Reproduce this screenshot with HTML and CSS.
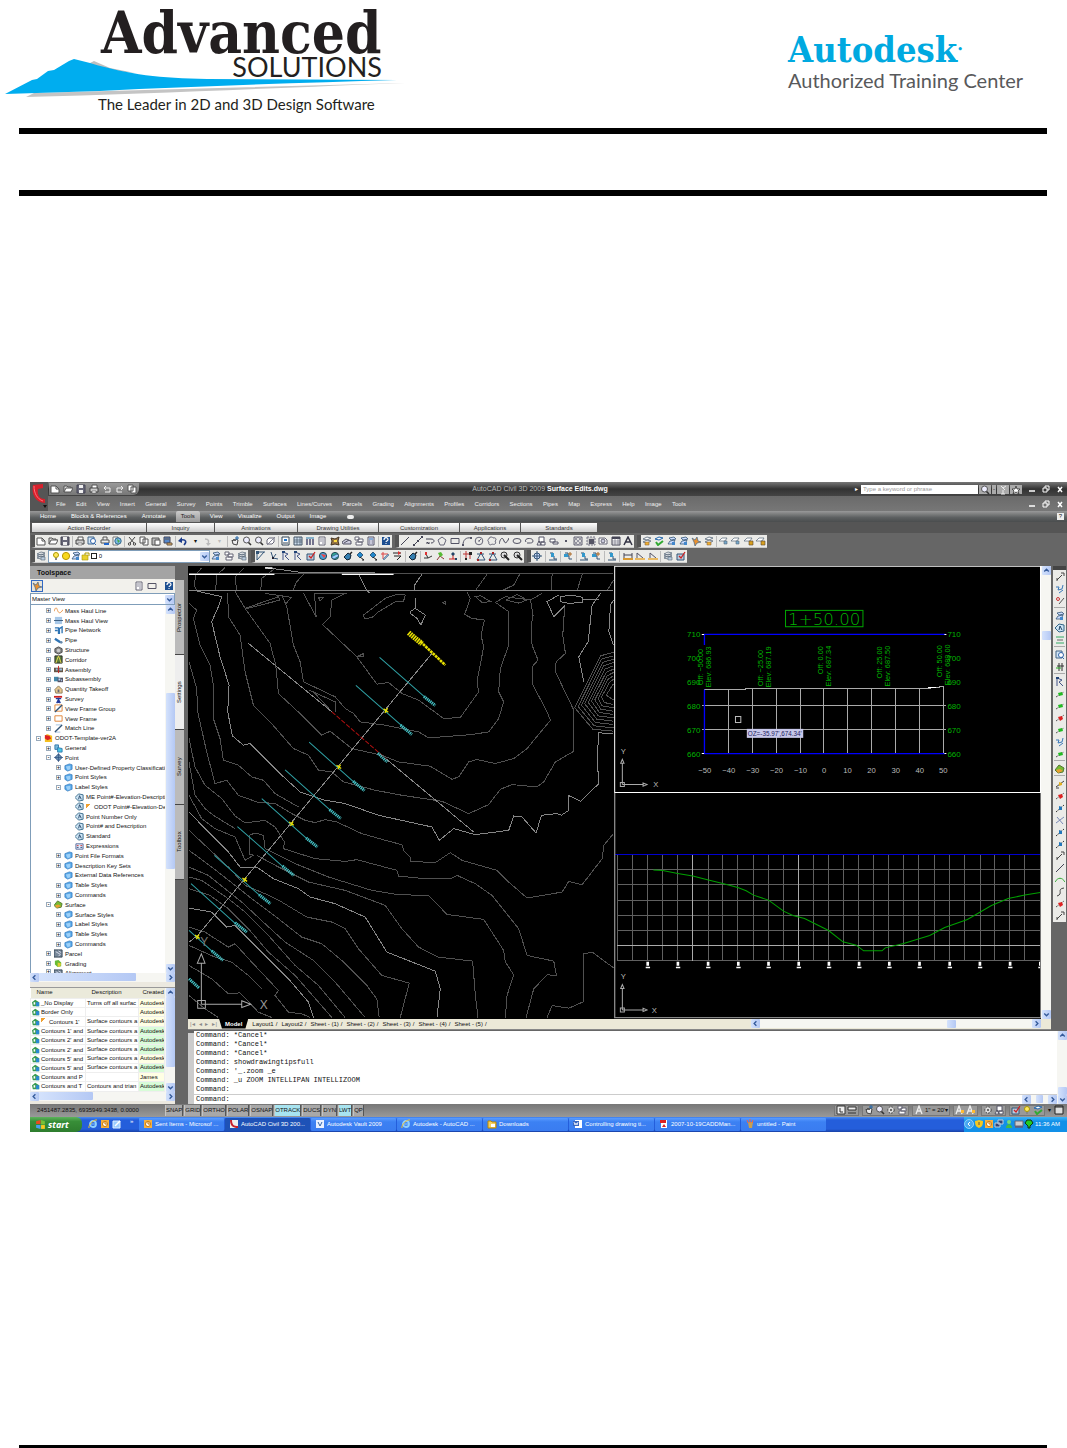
FILE: index.html
```html
<!DOCTYPE html>
<html lang="en">
  <head>
    <meta charset="UTF-8" />
    <meta name="viewport" content="width=device-width, initial-scale=1.0" />
    <title>Advanced Solutions</title>
    <link rel="stylesheet" href="styles.css">
  </head>
  <body>
    <!-- icon sprite -->
    <svg class="sprite" aria-hidden="true">
      <symbol id="new" viewBox="0 0 10 10"><path d="M1 2h5l3 3v4H1z" fill="#fff" stroke="#555"/><path d="M6 2v3h3" fill="none" stroke="#555"/></symbol>
      <symbol id="open" viewBox="0 0 10 10"><path d="M1 8V2h3l1 1h3v2" fill="#ddd" stroke="#555"/><path d="M1 8l2-4h7L8 8z" fill="#fff" stroke="#555"/></symbol>
      <symbol id="save" viewBox="0 0 10 10"><path d="M1 1h8v8H1z" fill="#667" stroke="#445"/><path d="M3 1h4v3H3zM3 6h4v3H3z" fill="#eee"/></symbol>
      <symbol id="print" viewBox="0 0 10 10"><path d="M3 4V1h5v3" fill="#fff" stroke="#555"/><path d="M1 4h8v4H1z" fill="#ccc" stroke="#444"/><path d="M3 7h4v2H3z" fill="#fff" stroke="#555" stroke-width=".6"/></symbol>
      <symbol id="preview" viewBox="0 0 10 10"><path d="M1 1h6v7H1z" fill="#cfe3f5" stroke="#468"/><circle cx="6" cy="5" r="2.500" fill="#fff" stroke="#36a"/><path d="M7 7l2 2" stroke="#36a"/></symbol>
      <symbol id="publish" viewBox="0 0 10 10"><path d="M3 4V1h4v3M1 4h8v3H1z" fill="#eee" stroke="#555"/><path d="M4 8h5" stroke="#26c" stroke-width="2"/></symbol>
      <symbol id="globe" viewBox="0 0 10 10"><path d="M1 1h5v8H1z" fill="#fff" stroke="#777"/><circle cx="6" cy="5" r="3.200" fill="#7ab8e8" stroke="#368"/><path d="M5 3l3 2-2 2z" fill="#4a4"/></symbol>
      <symbol id="cut" viewBox="0 0 10 10"><path d="M2 1l5 6M8 1L3 7" stroke="#444" fill="none"/><circle cx="2.500" cy="8" r="1.200" fill="none" stroke="#444"/><circle cx="7.500" cy="8" r="1.200" fill="none" stroke="#444"/></symbol>
      <symbol id="copy" viewBox="0 0 10 10"><path d="M1 1h5v6H1zM4 3h5v6H4z" fill="#fff" stroke="#555"/></symbol>
      <symbol id="paste" viewBox="0 0 10 10"><path d="M1 2h7v7H1z" fill="#bbb" stroke="#555"/><path d="M4 4h5v5H4z" fill="#fff" stroke="#555"/></symbol>
      <symbol id="match" viewBox="0 0 10 10"><path d="M1 1h6v6H1z" fill="#58c" stroke="#445"/><path d="M2 3h4M4 7h5v2H4z" fill="#eb6" stroke="#654"/></symbol>
      <symbol id="undo" viewBox="0 0 10 10"><path d="M6 9c3-3 2-6-3-5" fill="none" stroke="#1c3c8c" stroke-width="1.600"/><path d="M0 5l4-4v6z" fill="#1c3c8c"/></symbol>
      <symbol id="redo" viewBox="0 0 10 10"><path d="M3 3c4 0 4 2 3 5" fill="none" stroke="#bbb" stroke-width="1.400"/><path d="M4 7h5L6 10z" fill="#bbb"/></symbol>
      <symbol id="pan" viewBox="0 0 10 10"><path d="M2 4l1 4 4 1 1-5-2-1-1 2-1-2-1 2z" fill="#eee" stroke="#444"/><path d="M7 0v4M5 2h4" stroke="#26a"/></symbol>
      <symbol id="zoom" viewBox="0 0 10 10"><circle cx="4.500" cy="4" r="3" fill="#eef" stroke="#555"/><path d="M6.500 6.500L9 9" stroke="#333" stroke-width="1.600"/></symbol>
      <symbol id="orbit" viewBox="0 0 10 10"><path d="M3 2h5v4L6 8H1V4z" fill="#fff" stroke="#667"/><path d="M1 9l8-8" stroke="#889"/></symbol>
      <symbol id="props" viewBox="0 0 10 10"><path d="M1 1h7v8H1z" fill="#fff" stroke="#345"/><path d="M3 3h3v2H3z" fill="#27c"/><path d="M2 7h5" stroke="#345"/></symbol>
      <symbol id="grid" viewBox="0 0 10 10"><path d="M1 1h8v8H1z" fill="#cde" stroke="#456"/><path d="M1 4h8M1 6h8M4 1v8M7 1v8" stroke="#456" stroke-width=".7"/></symbol>
      <symbol id="bars" viewBox="0 0 10 10"><path d="M1 2h8" stroke="#27a"/><path d="M2 3v6M5 3v6M8 3v6" stroke="#557" stroke-width="1.600"/></symbol>
      <symbol id="sheet" viewBox="0 0 10 10"><path d="M2 1h6v8H2z" fill="#fff" stroke="#667"/><path d="M3 3h4M3 5h4M5 7h2" stroke="#889"/></symbol>
      <symbol id="mark" viewBox="0 0 10 10"><path d="M1 2l4 1 4-2-1 4 1 4-4-1-4 1 1-4z" fill="#974" stroke="#432"/><path d="M4 4h3v2H4z" fill="#fd4"/></symbol>
      <symbol id="hill" viewBox="0 0 10 10"><path d="M0 6l4-3 5 2v3H1z" fill="#ccd" stroke="#556"/><path d="M2 7l5-3" stroke="#556"/></symbol>
      <symbol id="blocks" viewBox="0 0 10 10"><path d="M1 1h4v3H1zM4 3h5v3H4zM2 6h6v3H2z" fill="#fff" stroke="#667"/></symbol>
      <symbol id="calc" viewBox="0 0 10 10"><path d="M2 1h6v8H2z" fill="#eef" stroke="#556"/><path d="M3 3h4" stroke="#26a"/><path d="M3 5h4M3 7h4" stroke="#556" stroke-dasharray="1 .5"/></symbol>
      <symbol id="help" viewBox="0 0 10 10"><path d="M1 1h8v8H1z" fill="#1d4f91"/><path d="M3 4c0-3 4-3 4-.5C7 5 5 5 5 6" fill="none" stroke="#fff" stroke-width="1.200"/><path d="M4.500 7h1v1h-1z" fill="#fff"/></symbol>
      <symbol id="line" viewBox="0 0 10 10"><path d="M1 9l8-8" stroke="#445"/></symbol>
      <symbol id="xline" viewBox="0 0 10 10"><path d="M1 9l8-8" stroke="#445"/><path d="M0 8h2v2H0zM8 0h2v2H8zM4 4h2v2H4z" fill="#445"/></symbol>
      <symbol id="pline" viewBox="0 0 10 10"><path d="M1 7h4M1 3h5c4 0 4 4 0 4" fill="none" stroke="#445"/><path d="M2 6l2 2" stroke="#445"/></symbol>
      <symbol id="polygon" viewBox="0 0 10 10"><path d="M5 1l4 3-2 5H3L1 4z" fill="none" stroke="#667"/></symbol>
      <symbol id="rect" viewBox="0 0 10 10"><path d="M1 2.500h8v5H1z" fill="none" stroke="#556"/></symbol>
      <symbol id="arc" viewBox="0 0 10 10"><path d="M1 9C1 4 4 1 9 2" fill="none" stroke="#556"/><path d="M0 8h2v2H0zM8 1h2v2H8z" fill="#556"/></symbol>
      <symbol id="circle" viewBox="0 0 10 10"><circle cx="5" cy="5" r="3.800" fill="none" stroke="#667"/><path d="M5 5l2-2M4 5h2" stroke="#667"/></symbol>
      <symbol id="cloud" viewBox="0 0 10 10"><path d="M2 3c0-3 4-2 4-1 3-1 4 2 2 3 2 3-1 4-3 3-2 2-4 0-3-2-2-1-1-3 0-3z" fill="none" stroke="#667"/></symbol>
      <symbol id="spline" viewBox="0 0 10 10"><path d="M0 8c2-8 4-6 5-3s3 2 5-3" fill="none" stroke="#445"/></symbol>
      <symbol id="ellipse" viewBox="0 0 10 10"><ellipse cx="5" cy="5" rx="4" ry="2.500" fill="none" stroke="#556"/></symbol>
      <symbol id="earc" viewBox="0 0 10 10"><path d="M2 6C-1 2 9 1 9 5c0 2-2 2-4 2" fill="none" stroke="#556"/><path d="M4 6v2" stroke="#556"/></symbol>
      <symbol id="insert" viewBox="0 0 10 10"><path d="M3 1h5v5H3zM1 9l2-4 2 4zM5 6h4v3H5z" fill="#fff" stroke="#556"/></symbol>
      <symbol id="make" viewBox="0 0 10 10"><path d="M1 3h5v3H1zM4 6h5v2H4z" fill="#fff" stroke="#556"/></symbol>
      <symbol id="point" viewBox="0 0 10 10"><path d="M4 4h2v2H4z" fill="#556"/></symbol>
      <symbol id="hatch" viewBox="0 0 10 10"><path d="M1 1h8v8H1z" fill="#ddd" stroke="#667"/><path d="M1 5l4-4M1 9l8-8M5 9l4-4M1 5l4 4M1 1l8 8M5 1l4 4" stroke="#778" stroke-width=".7"/></symbol>
      <symbol id="grad" viewBox="0 0 10 10"><path d="M1 1h8v8H1z" fill="#ccc" stroke="#778" stroke-dasharray="2 1"/><path d="M3 3h5v5H3z" fill="#556"/></symbol>
      <symbol id="region" viewBox="0 0 10 10"><path d="M1 2h6l2 2v4H1z" fill="#fff" stroke="#667"/><circle cx="5" cy="5" r="2" fill="#ccd" stroke="#667"/></symbol>
      <symbol id="table" viewBox="0 0 10 10"><path d="M1 1h8v8H1z" fill="#fff" stroke="#445"/><path d="M1 2h8" stroke="#445" stroke-width="2"/><path d="M1 5h8M1 7h8M4 2v7M7 2v7" stroke="#667" stroke-width=".6"/></symbol>
      <symbol id="mtext" viewBox="0 0 10 10"><path d="M1 9l4-8 4 8M3 6h4" fill="none" stroke="#334" stroke-width="1.500"/></symbol>
      <symbol id="layers" viewBox="0 0 10 10"><path d="M1 3l4-2 4 1-4 2zM1 5l4-2 4 1-4 2zM1 7l4-2 4 1-4 2z" fill="#fff" stroke="#567" stroke-width=".8"/><path d="M5 6h4v3H5z" fill="#bcd" stroke="#567" stroke-width=".6"/></symbol>
      <symbol id="layer-y" viewBox="0 0 10 10"><path d="M1 3l4-2 4 1-4 2zM1 6l4-2 4 1-4 2z" fill="#fff" stroke="#567" stroke-width=".8"/><path d="M3 6h4v3H3z" fill="#f0b030" stroke="#864" stroke-width=".6"/></symbol>
      <symbol id="layer-g" viewBox="0 0 10 10"><path d="M1 3l4-2 4 1-4 2z" fill="#fff" stroke="#26a"/><path d="M2 6l2 3 5-4" fill="none" stroke="#3a3" stroke-width="2"/></symbol>
      <symbol id="layer-b" viewBox="0 0 10 10"><path d="M2 2l5-1 2 2-5 1zM1 8l2-3 5-1-2 4z" fill="#cdf" stroke="#357" stroke-width=".8"/><path d="M5 6h3v3H5z" fill="#48c"/></symbol>
      <symbol id="layer-s" viewBox="0 0 10 10"><path d="M0 5l3-3h5L6 5z" fill="#fff" stroke="#567" stroke-width=".7"/><path d="M5 5h3v3H5z" fill="#7ac" stroke="#567" stroke-width=".6"/></symbol>
      <symbol id="layer-l" viewBox="0 0 10 10"><path d="M0 5l3-3h5L6 5z" fill="#fff" stroke="#567" stroke-width=".7"/><path d="M5 5h4v4H5z" fill="#d8a020" stroke="#543" stroke-width=".6"/></symbol>
      <symbol id="spark" viewBox="0 0 10 10"><path d="M1 2l3 2 2-3 1 4 3 1-4 1-2 3-1-4z" fill="#e89030" stroke="#468" stroke-width=".7"/></symbol>
      <symbol id="angle" viewBox="0 0 10 10"><path d="M1 1h8M1 1v8l7-8" fill="none" stroke="#357"/><path d="M0 0h3v3H0z" fill="#357"/></symbol>
      <symbol id="traverse" viewBox="0 0 10 10"><path d="M2 1l2 6 5 1M4 7l3-4" fill="none" stroke="#357"/><path d="M3 6h2v2H3z" fill="#223"/></symbol>
      <symbol id="flag" viewBox="0 0 10 10"><path d="M2 9V1l5 2-3 2 4 4" fill="none" stroke="#458"/><path d="M1 0h3v2H1z" fill="#247"/></symbol>
      <symbol id="check" viewBox="0 0 10 10"><path d="M1 3h7v6H1z" fill="#bcd" stroke="#357"/><path d="M3 5l2 2 4-6" fill="none" stroke="#c22" stroke-width="1.300"/></symbol>
      <symbol id="ball" viewBox="0 0 10 10"><circle cx="5" cy="5" r="3.600" fill="#48a0d8" stroke="#245"/><path d="M3 3l5 1-2 3z" fill="#e44"/></symbol>
      <symbol id="ball-g" viewBox="0 0 10 10"><circle cx="5" cy="5" r="3.600" fill="#3a9" stroke="#245"/><path d="M1 6l6-3 2 2-5 3z" fill="#9cf" stroke="#246" stroke-width=".6"/></symbol>
      <symbol id="tag" viewBox="0 0 10 10"><path d="M1 6l4-4 3 2-1 4-3 1z" fill="#357fb0" stroke="#123"/><path d="M7 3l2-2" stroke="#222" stroke-width="1.500"/></symbol>
      <symbol id="probe" viewBox="0 0 10 10"><path d="M2 4l3-3 3 3-3 3z" fill="#28c" stroke="#135" stroke-width=".7"/><path d="M5 6l4 3M7 9h2" stroke="#222"/></symbol>
      <symbol id="pencil" viewBox="0 0 10 10"><path d="M1 3h7M3 1v7" stroke="#d44"/><path d="M3 8l5-5 1 1-5 5z" fill="#8ac" stroke="#357" stroke-width=".5"/></symbol>
      <symbol id="road" viewBox="0 0 10 10"><path d="M1 2h8M2 5h7M5 9l4-4" fill="none" stroke="#222"/><path d="M6 0l3 2-3 2z" fill="#d33"/></symbol>
      <symbol id="nodes" viewBox="0 0 10 10"><path d="M1 7h4l-2-4M5 7l4-2" fill="none" stroke="#333"/><path d="M2 1h2v3H2z" fill="#d33"/></symbol>
      <symbol id="nodes-g" viewBox="0 0 10 10"><path d="M2 9l3-4 4 3" fill="none" stroke="#833"/><path d="M3 2l3-1 2 3-3 2z" fill="#5b3"/></symbol>
      <symbol id="nodes-b" viewBox="0 0 10 10"><path d="M1 8h8M5 8V4" stroke="#c22"/><path d="M3 3l2-2 2 2-2 2zM7 7h2v2H7z" fill="#246"/></symbol>
      <symbol id="crossing" viewBox="0 0 10 10"><path d="M0 3h9M3 0v9M7 3v5" stroke="#b33"/><path d="M6 1h3v3H6zM2 7h2v2H2z" fill="#222"/></symbol>
      <symbol id="tri" viewBox="0 0 10 10"><path d="M1 9l4-7 4 7zM1 3h7" fill="none" stroke="#357"/><path d="M4 1h2v2H4zM1 8h2v2H1z" fill="#a22"/></symbol>
      <symbol id="disc" viewBox="0 0 10 10"><circle cx="4" cy="4" r="3" fill="#ddd" stroke="#333"/><path d="M4 4l5 5" stroke="#222" stroke-width="2"/></symbol>
      <symbol id="target" viewBox="0 0 10 10"><circle cx="5" cy="5" r="3" fill="#cdf" stroke="#357"/><path d="M0 5h10M5 0v10" stroke="#357"/></symbol>
      <symbol id="steps" viewBox="0 0 10 10"><path d="M2 2h3v3h1v3h3M1 9h8" fill="none" stroke="#357"/><path d="M3 2h3v4H3z" fill="#39c"/></symbol>
      <symbol id="steps2" viewBox="0 0 10 10"><path d="M2 2h3v3h1v3h3" fill="none" stroke="#357"/><path d="M1 3h4v3H1z" fill="#39c"/><path d="M5 3h4M7 1v4" stroke="#a62"/></symbol>
      <symbol id="bench" viewBox="0 0 10 10"><path d="M1 2v5M9 2v5M1 4h8" stroke="#445"/><path d="M0 7h10v2H0z" fill="#d89830"/></symbol>
      <symbol id="ramp" viewBox="0 0 10 10"><path d="M2 7V2l6 5" fill="none" stroke="#556"/><path d="M0 7h10v2H0z" fill="#e8b860"/></symbol>
      <symbol id="arrow" viewBox="0 0 10 10"><path d="M2 8l5-5M2 6v3M6 1h3v3" fill="none" stroke="#444"/></symbol>
      <symbol id="arrow-b" viewBox="0 0 10 10"><path d="M1 3h3l-1 3 4-1 1-4M4 9l4-3" fill="none" stroke="#3a78b8"/></symbol>
      <symbol id="arrow-r" viewBox="0 0 10 10"><path d="M4 8l5-6" stroke="#555"/><circle cx="3" cy="3" r="1.500" fill="none" stroke="#c33"/></symbol>
      <symbol id="pt-g" viewBox="0 0 10 10"><path d="M1 8l8-5" stroke="#555" stroke-dasharray="2 1"/><path d="M3 4l4-1 1 3-4 1z" fill="#2b2"/></symbol>
      <symbol id="pt-r" viewBox="0 0 10 10"><path d="M1 8l8-6" stroke="#555" stroke-dasharray="2 1"/><path d="M3 4l4-1 1 3-3 2z" fill="#d22"/></symbol>
      <symbol id="pt-b" viewBox="0 0 10 10"><path d="M1 9l8-7" stroke="#333" stroke-dasharray="2 1"/><path d="M4 3l3 1v3H4z" fill="#27b"/></symbol>
      <symbol id="pt-y" viewBox="0 0 10 10"><path d="M1 8l8-6M1 9h3" stroke="#444"/><path d="M4 3l3 1v2L4 7z" fill="#e0b020"/></symbol>
      <symbol id="cross" viewBox="0 0 10 10"><path d="M1 8l8-6M2 2l6 7" stroke="#7a8ab8"/></symbol>
      <symbol id="fork" viewBox="0 0 10 10"><path d="M4 1v8M7 1v8M2 4h7" stroke="#333"/><path d="M1 6h5" stroke="#2a2"/></symbol>
      <symbol id="hump" viewBox="0 0 10 10"><path d="M0 7c3-5 7-5 10 0" fill="none" stroke="#3a3"/></symbol>
      <symbol id="lines" viewBox="0 0 10 10"><path d="M1 2h8M1 8h8" stroke="#3a6"/><path d="M2 5h6" stroke="#666"/></symbol>
      <symbol id="ess" viewBox="0 0 10 10"><path d="M9 1c-8 1 0 6-7 8" fill="none" stroke="#444"/></symbol>
      <symbol id="folder" viewBox="0 0 10 10"><path d="M1 3l5-2 3 1v5L4 9 1 7z" fill="#58a8e8" stroke="#2870b8" stroke-width=".7"/><path d="M2 4l5-1v4L4 8z" fill="#9cd0f8"/></symbol>
      <symbol id="label" viewBox="0 0 10 10"><path d="M0 5l4-4 5 1v6L4 9z" fill="#cde4f4" stroke="#368"/><path d="M4 7l1-4 2 4" fill="none" stroke="#246"/></symbol>
      <symbol id="expr" viewBox="0 0 10 10"><path d="M1 2h8v6H1z" fill="#e4ecfa" stroke="#569"/><path d="M2 4h2M6 4h2" stroke="#c33"/><path d="M2 6h2M6 6h2" stroke="#247"/></symbol>
      <symbol id="wave" viewBox="0 0 10 10"><path d="M0 6c2-6 3-4 4-1s3 4 6-1" fill="none" stroke="#e89040"/></symbol>
      <symbol id="strip" viewBox="0 0 10 10"><path d="M1 1h8v8H1z" fill="#a8c8e8"/><path d="M0 5h10" stroke="#357"/></symbol>
      <symbol id="pipes" viewBox="0 0 10 10"><path d="M1 2h4v7M6 9V3l3-2v7M1 5h3" fill="none" stroke="#2e74b5" stroke-width="1.500"/></symbol>
      <symbol id="pipe" viewBox="0 0 10 10"><path d="M1 3l6 4" stroke="#2e74b5" stroke-width="2.500"/><circle cx="8" cy="7" r="1.500" fill="#68a"/></symbol>
      <symbol id="dish" viewBox="0 0 10 10"><path d="M3 1l4 4M5 3l3-2M5 5v4M3 9h4" fill="none" stroke="#eee"/></symbol>
      <symbol id="struct" viewBox="0 0 10 10"><path d="M1 3l4-2 4 2v4L5 9 1 7z" fill="#888" stroke="#444"/><circle cx="5" cy="5" r="2" fill="#ccc"/></symbol>
      <symbol id="corr" viewBox="0 0 10 10"><path d="M1 1h8v8H1z" fill="#5a7a3a" stroke="#222"/><path d="M2 9L5 1l3 8" fill="none" stroke="#ed5"/></symbol>
      <symbol id="assy" viewBox="0 0 10 10"><path d="M0 3h10v5H0z" fill="#654"/><path d="M5 1v8" stroke="#c22"/><path d="M2 4h2v2H2zM6 4h3v2H6z" fill="#9bd"/></symbol>
      <symbol id="subassy" viewBox="0 0 10 10"><path d="M0 2h5v5H0z" fill="#48a"/><path d="M4 3h6v5H4z" fill="#556"/><path d="M5 4h2v2H5zM8 5h1v2H8z" fill="#bdf"/></symbol>
      <symbol id="house" viewBox="0 0 10 10"><path d="M1 5l4-4 4 4v4H2z" fill="#e8c890" stroke="#875"/><path d="M4 5h2v3H4z" fill="#667"/></symbol>
      <symbol id="survey" viewBox="0 0 10 10"><path d="M0 2h9" stroke="#c22" stroke-width="2"/><path d="M2 4h6M5 3v6M3 9l2-4 2 4" fill="none" stroke="#223a9c" stroke-width="1.500"/></symbol>
      <symbol id="frame" viewBox="0 0 10 10"><path d="M1 2h8v6H1z" fill="#fff" stroke="#e08030"/></symbol>
      <symbol id="frames" viewBox="0 0 10 10"><path d="M1 1h8v7H1z" fill="#fff" stroke="#e08030"/><path d="M1 9l8-8" stroke="#357" stroke-width="1.500"/></symbol>
      <symbol id="matchline" viewBox="0 0 10 10"><path d="M2 1h7M1 9h6" stroke="#9bd"/><path d="M1 9l8-8" stroke="#357" stroke-width="1.500"/></symbol>
      <symbol id="dwg" viewBox="0 0 10 10"><path d="M3 0l6 2v7H1V4z" fill="#f4c020"/><path d="M1 1l5 1 2 3-4 2-3-2z" fill="#d22"/></symbol>
      <symbol id="general" viewBox="0 0 10 10"><path d="M1 1h4v5H1z" fill="#7bd" stroke="#37a"/><path d="M4 4l5 1v4H4z" fill="#48c8e8" stroke="#37a"/></symbol>
      <symbol id="ptnode" viewBox="0 0 10 10"><path d="M5 1l4 4-4 4-4-4z" fill="#6a8fb0" stroke="#247"/><path d="M5 0v10M0 5h10" stroke="#247" stroke-width=".6"/></symbol>
      <symbol id="surface" viewBox="0 0 10 10"><path d="M0 6l4-5 5 3-1 4-5 1z" fill="#7b3" stroke="#573"/><path d="M1 6l4-1 3 2-5 2z" fill="#e9a030"/></symbol>
      <symbol id="parcel" viewBox="0 0 10 10"><path d="M0 1h9v8H0z" fill="#789" stroke="#345"/><path d="M2 3l5 3-2 2M5 2l3 2" stroke="#dde" fill="none"/></symbol>
      <symbol id="grading" viewBox="0 0 10 10"><path d="M1 2l4-1 3 3v4L4 9 1 6z" fill="#6b3"/><path d="M4 4l4 1-1 3-3 1z" fill="#dc3"/></symbol>
      <symbol id="style" viewBox="0 0 10 10"><path d="M0 4l4-3 5 3v5H1z" fill="#3a9a50"/><path d="M5 4h4v5H5z" fill="#2a88d0"/><path d="M2 4h2v3H2z" fill="#fff"/></symbol>
      <symbol id="bulb" viewBox="0 0 10 10"><circle cx="5" cy="4" r="2.500" fill="#ffe860" stroke="#a90"/><path d="M4 7h2v2H4z" fill="#888"/></symbol>
      <symbol id="sun" viewBox="0 0 10 10"><circle cx="5" cy="5" r="3.600" fill="#f8d820" stroke="#b90"/></symbol>
      <symbol id="lock" viewBox="0 0 10 10"><path d="M4 4V2h4v3" fill="none" stroke="#a90"/><path d="M1 4h6v5H1z" fill="#e8d030" stroke="#a90" stroke-width=".6"/></symbol>
      <symbol id="chev-d" viewBox="0 0 10 10"><path d="M2.500 4L5 6.500 7.500 4" fill="none" stroke="#345a9a" stroke-width="1.500"/></symbol>
      <symbol id="chev-u" viewBox="0 0 10 10"><path d="M2.500 6L5 3.500 7.500 6" fill="none" stroke="#345a9a" stroke-width="1.500"/></symbol>
      <symbol id="chev-l" viewBox="0 0 10 10"><path d="M6 2.500L3.500 5 6 7.500" fill="none" stroke="#345a9a" stroke-width="1.500"/></symbol>
      <symbol id="chev-r" viewBox="0 0 10 10"><path d="M4 2.500L6.500 5 4 7.500" fill="none" stroke="#345a9a" stroke-width="1.500"/></symbol>
      <symbol id="min" viewBox="0 0 10 10"><path d="M2 7h6" stroke="#fff" stroke-width="1.500"/></symbol>
      <symbol id="max" viewBox="0 0 10 10"><path d="M2 4h4v4H2zM4 4V2h4v4H6" fill="none" stroke="#fff"/></symbol>
      <symbol id="close" viewBox="0 0 10 10"><path d="M3 3l4 5M7 3L3 8" stroke="#fff" stroke-width="1.500"/></symbol>
      <symbol id="star" viewBox="0 0 10 10"><path d="M5 1l1 3h3L7 6l1 3-3-2-3 2 1-3-2-2h3z" fill="#fff" stroke="#333" stroke-width=".8"/></symbol>
      <symbol id="ie" viewBox="0 0 10 10"><circle cx="5" cy="5" r="3" fill="none" stroke="#8fd0ff" stroke-width="1.800"/><path d="M2 5h6" stroke="#8fd0ff"/><path d="M1 9C0 6 6 0 9 1" fill="none" stroke="#f0c030"/></symbol>
      <symbol id="mail" viewBox="0 0 10 10"><path d="M1 1h8v8H1z" fill="#f4b040"/><circle cx="5" cy="5" r="2.500" fill="#fff" stroke="#c70"/><path d="M5 3v2h2" stroke="#c70" fill="none"/></symbol>
      <symbol id="desk" viewBox="0 0 10 10"><path d="M1 2h7v7H1z" fill="#9cf" stroke="#def"/><path d="M3 7l5-5" stroke="#fff" stroke-width="1.500"/></symbol>
      <symbol id="civil" viewBox="0 0 10 10"><path d="M1 1h8v8H1z" fill="#eee"/><path d="M3 1c0 5 2 6 6 6v2C4 9 1 7 1 1z" fill="#c8202c"/></symbol>
      <symbol id="vault" viewBox="0 0 10 10"><path d="M1 1h8v8H1z" fill="#e8f0ff"/><path d="M3 3l2 4 2-4" fill="none" stroke="#36a"/></symbol>
      <symbol id="dir" viewBox="0 0 10 10"><path d="M1 2h3l1 1h4v6H1z" fill="#f4d060" stroke="#b80"/><path d="M4 5h4v3H4z" fill="#fff"/></symbol>
      <symbol id="word" viewBox="0 0 10 10"><path d="M2 1h7v8H2z" fill="#fff"/><path d="M0 2h6v5H0z" fill="#3a66c0"/><path d="M1 3l1 3 1-2 1 2 1-3" fill="none" stroke="#fff" stroke-width=".8"/></symbol>
      <symbol id="pdf" viewBox="0 0 10 10"><path d="M2 1h6v8H2z" fill="#fff"/><path d="M1 1h6v3H1zM3 8l2-3 2 3z" fill="#d22"/></symbol>
      <symbol id="paint" viewBox="0 0 10 10"><path d="M3 3l1 6h3l1-6z" fill="#c8a050"/><path d="M3 4L2 1M5 4V0M7 4l1-3" stroke="#e64"/></symbol>
      <symbol id="shield" viewBox="0 0 10 10"><path d="M5 1l4 1c0 4-1 6-4 7-3-1-4-3-4-7z" fill="#f4c820"/><path d="M5 3v3" stroke="#654"/></symbol>
      <symbol id="net" viewBox="0 0 10 10"><path d="M1 4h5v4H1zM4 1h5v4H4z" fill="#347" stroke="#bcd"/></symbol>
      <symbol id="user" viewBox="0 0 10 10"><circle cx="5" cy="3" r="2" fill="#7d7"/><path d="M2 9c0-5 6-5 6 0z" fill="#4b4"/></symbol>
      <symbol id="drive" viewBox="0 0 10 10"><path d="M1 2h8v5H1z" fill="#ccc" stroke="#667"/><path d="M1 8h8" stroke="#844"/></symbol>
      <symbol id="tree" viewBox="0 0 10 10"><path d="M1 4l2-3h4l2 3-3 3v2H4V7z" fill="#2c2" stroke="#131"/></symbol>
      <symbol id="model" viewBox="0 0 10 10"><path d="M1 1h8v8H1z" fill="#eee" stroke="#333"/><path d="M4 3v4h3" fill="none" stroke="#333"/></symbol>
      <symbol id="layout" viewBox="0 0 10 10"><path d="M1 2h8v3H1zM1 8h8" fill="#eee" stroke="#333"/></symbol>
      <symbol id="anno" viewBox="0 0 10 10"><path d="M2 9l3-8 3 8M3 6h4" fill="none" stroke="#eee" stroke-width="1.300"/></symbol>
      <symbol id="anno-y" viewBox="0 0 10 10"><path d="M1 9l3-8 3 8M2 6h4" fill="none" stroke="#eee" stroke-width="1.300"/><path d="M6 5h3v3H6z" fill="#fb3"/></symbol>
      <symbol id="gear" viewBox="0 0 10 10"><circle cx="5" cy="5" r="3.200" fill="#ddd" stroke="#444" stroke-dasharray="2 1"/><circle cx="5" cy="5" r="1" fill="#444"/></symbol>
      <symbol id="ucs" viewBox="0 0 120 120"><path d="M4 104h12v12H4zM10 110V46M10 110h64M5 46l5-12 5 12zM72 105l12 5-12 5z" fill="none" stroke="#aaa" stroke-width="3"/></symbol>
    </svg>

    <header class="letterhead">
      <svg class="logo-asi" viewBox="0 0 410 118" role="img" aria-label="Advanced Solutions">
        <path d="M88 64l6-3 16 7 25 5-30-3z" fill="#bfbfbf"/>
        <path d="M26 97l8-4 371-10C300 87 150 94 26 97z" fill="#c4c4c4"/>
        <path d="M5 94l27-14 5-1 11-8 6-1 15-9 5-2 16 4c40 12 70 15 117 16l190 1C300 83 200 86 100 91z" fill="#00adef"/>
        <text x="101" y="53" class="asi-name">Advanced</text>
        <text x="382" y="77" class="asi-sub">SOLUTIONS</text>
        <text x="98" y="110" class="asi-tag">The Leader in 2D and 3D Design Software</text>
      </svg>
      <div class="logo-adsk">
        <div class="adsk-name">Autodesk<span>•</span></div>
        <div class="adsk-sub">Authorized Training Center</div>
      </div>
    </header>
    <div class="title-band"></div>

    <main class="app">
      <div class="app-top">
        <svg class="app-button" viewBox="0 0 18 29" role="img" aria-label="Application menu"><path d="M0 0h18v29H0z" fill="#555"/><path d="M3 3c-2 8 2 18 12 18v-4C9 17 7 12 8 7l5-1V2z" fill="#d8202c"/><path d="M4 4c0 7 3 13 9 15" stroke="#ff7078" fill="none"/><path d="M13 23h4l-2 3z" fill="#111"/></svg>
        <div class="titlebar">
          <div class="quick">
            <button title="New"><svg><use href="#new"/></svg></button>
            <button title="Open"><svg><use href="#open"/></svg></button>
            <button title="Save"><svg><use href="#save"/></svg></button>
            <button title="Plot"><svg><use href="#print"/></svg></button>
            <button title="Undo"><svg><path d="M3 8h5V4H2M4 2L2 4l2 2" fill="none" stroke="#eee"/></svg></button>
            <button title="Redo"><svg><path d="M7 8H2V4h6M6 2l2 2-2 2" fill="none" stroke="#eee"/></svg></button>
            <button title="Sheets"><svg><use href="#copy"/></svg></button>
          </div>
          <div class="doc-title">AutoCAD Civil 3D 2009 <b>Surface Edits.dwg</b></div>
          <div class="info">
            <span class="info-mark">▸</span>
            <input type="text" aria-label="Search" placeholder="Type a keyword or phrase">
            <button class="info-btn" title="Search"><svg><use href="#zoom"/></svg></button>
            <button class="info-btn narrow" title="Search options">-</button>
            <button class="info-btn" title="Communication"><svg><use href="#dish"/></svg></button>
            <button class="info-btn" title="Favorites"><svg><use href="#star"/></svg></button>
            <div class="win-btns">
              <button title="Minimize"><svg><use href="#min"/></svg></button>
              <button title="Restore"><svg><use href="#max"/></svg></button>
              <button title="Close"><svg><use href="#close"/></svg></button>
            </div>
          </div>
        </div>
        <nav class="menubar">
          <div class="menus"><a href="#">File</a><a href="#">Edit</a><a href="#">View</a><a href="#">Insert</a><a href="#">General</a><a href="#">Survey</a><a href="#">Points</a><a href="#">Trimble</a><a href="#">Surfaces</a><a href="#">Lines/Curves</a><a href="#">Parcels</a><a href="#">Grading</a><a href="#">Alignments</a><a href="#">Profiles</a><a href="#">Corridors</a><a href="#">Sections</a><a href="#">Pipes</a><a href="#">Map</a><a href="#">Express</a><a href="#">Help</a><a href="#">Image</a><a href="#">Tools</a></div>
          <div class="win-btns">
            <button title="Minimize drawing"><svg><use href="#min"/></svg></button>
            <button title="Restore drawing"><svg><use href="#max"/></svg></button>
            <button title="Close drawing"><svg><use href="#close"/></svg></button>
          </div>
        </nav>
        <nav class="ribbon-tabs">
          <a href="#">Home</a><a href="#">Blocks &amp; References</a><a href="#">Annotate</a><a href="#" class="active">Tools</a><a href="#">View</a><a href="#">Visualize</a><a href="#">Output</a><a href="#">Image</a>
          <span class="pill"></span>
          <button class="help" title="Help">?</button>
        </nav>
        <div class="panels">
          <button class="p114">Action Recorder</button><button class="p67">Inquiry</button><button class="p82">Animations</button><button class="p80">Drawing Utilities</button><button class="p80">Customization</button><button class="p60">Applications</button><button class="p76">Standards</button>
        </div>
      </div>

      <div class="toolbar-row">
        <div class="toolbar w361">
          <button title="New"><svg><use href="#new"/></svg></button><button title="Open"><svg><use href="#open"/></svg></button><button title="Save"><svg><use href="#save"/></svg></button><i></i>
          <button title="Plot"><svg><use href="#print"/></svg></button><button title="Preview"><svg><use href="#preview"/></svg></button><button title="Publish"><svg><use href="#publish"/></svg></button><button title="3D DWF"><svg><use href="#globe"/></svg></button><i></i>
          <button title="Cut"><svg><use href="#cut"/></svg></button><button title="Copy"><svg><use href="#copy"/></svg></button><button title="Paste"><svg><use href="#paste"/></svg></button><button title="Match"><svg><use href="#match"/></svg></button><i></i>
          <button title="Undo"><svg><use href="#undo"/></svg></button><button class="drop" title="Undo list">▾</button><button title="Redo"><svg><use href="#redo"/></svg></button><button class="drop dim" title="Redo list">▾</button><i></i>
          <button title="Pan"><svg><use href="#pan"/></svg></button><button title="Zoom"><svg><use href="#zoom"/></svg></button><button title="Zoom window"><svg><use href="#zoom"/></svg></button><button title="Orbit"><svg><use href="#orbit"/></svg></button><i></i>
          <button title="Properties"><svg><use href="#props"/></svg></button><button title="DesignCenter"><svg><use href="#grid"/></svg></button><button title="Palettes"><svg><use href="#bars"/></svg></button><button title="Sheet set"><svg><use href="#sheet"/></svg></button><button title="Markup"><svg><use href="#mark"/></svg></button><button title="Terrain"><svg><use href="#hill"/></svg></button><button title="Blocks"><svg><use href="#blocks"/></svg></button><button title="Calculator"><svg><use href="#calc"/></svg></button><i></i>
          <button title="Help"><svg><use href="#help"/></svg></button>
        </div>
        <div class="toolbar w239">
          <button title="Line"><svg><use href="#line"/></svg></button><button title="Construction line"><svg><use href="#xline"/></svg></button><button title="Polyline"><svg><use href="#pline"/></svg></button><button title="Polygon"><svg><use href="#polygon"/></svg></button><button title="Rectangle"><svg><use href="#rect"/></svg></button><button title="Arc"><svg><use href="#arc"/></svg></button><button title="Circle"><svg><use href="#circle"/></svg></button><button title="Revision cloud"><svg><use href="#cloud"/></svg></button><button title="Spline"><svg><use href="#spline"/></svg></button><button title="Ellipse"><svg><use href="#ellipse"/></svg></button><button title="Ellipse arc"><svg><use href="#earc"/></svg></button><button title="Insert"><svg><use href="#insert"/></svg></button><button title="Make block"><svg><use href="#make"/></svg></button><button title="Point"><svg><use href="#point"/></svg></button><button title="Hatch"><svg><use href="#hatch"/></svg></button><button title="Gradient"><svg><use href="#grad"/></svg></button><button title="Region"><svg><use href="#region"/></svg></button><button title="Table"><svg><use href="#table"/></svg></button><button title="Text"><svg><use href="#mtext"/></svg></button>
        </div>
        <div class="toolbar w130">
          <button title="Layer walk"><svg><use href="#layer-y"/></svg></button><button title="Make current"><svg><use href="#layer-g"/></svg></button><button title="Layer previous"><svg><use href="#layer-b"/></svg></button><button title="Layer isolate"><svg><use href="#layer-b"/></svg></button><button title="Layer merge"><svg><use href="#spark"/></svg></button><button title="Layer match"><svg><use href="#layer-y"/></svg></button><i></i>
          <button title="Freeze"><svg><use href="#layer-s"/></svg></button><button title="Off"><svg><use href="#layer-s"/></svg></button><button title="Lock"><svg><use href="#layer-l"/></svg></button><button title="Unlock"><svg><use href="#layer-l"/></svg></button>
        </div>
      </div>
      <div class="toolbar-row">
        <div class="toolbar w217">
          <button title="Layers"><svg><use href="#layers"/></svg></button>
          <div class="layer-box">
            <svg><use href="#bulb"/></svg><svg><use href="#sun"/></svg><svg><use href="#layer-b"/></svg><svg><use href="#lock"/></svg><span class="swatch"></span>
            <select aria-label="Layer"><option>0</option></select>
            <span class="sb"><svg><use href="#chev-d"/></svg></span>
          </div>
          <button title="Object layer"><svg><use href="#layer-b"/></svg></button><button title="Previous"><svg><use href="#blocks"/></svg></button><button title="States"><svg><use href="#layers"/></svg></button>
        </div>
        <div class="toolbar w273">
          <button title="Angle"><svg><use href="#angle"/></svg></button><button title="Traverse"><svg><use href="#traverse"/></svg></button><button title="Bearing"><svg><use href="#flag"/></svg></button><button title="Azimuth"><svg><use href="#flag"/></svg></button><button title="Check"><svg><use href="#check"/></svg></button><button title="Station"><svg><use href="#ball"/></svg></button><button title="Grade"><svg><use href="#ball-g"/></svg></button><button title="Tag"><svg><use href="#tag"/></svg></button><button title="Probe"><svg><use href="#probe"/></svg></button><button title="Probe object"><svg><use href="#probe"/></svg></button><button title="Edit"><svg><use href="#pencil"/></svg></button><button title="Road"><svg><use href="#road"/></svg></button><i></i>
          <button title="Rotate"><svg><use href="#tag"/></svg></button><i></i>
          <button title="Point"><svg><use href="#nodes"/></svg></button><button title="Point group"><svg><use href="#nodes-g"/></svg></button><button title="Point elevation"><svg><use href="#nodes-b"/></svg></button><i></i>
          <button title="Intersection"><svg><use href="#crossing"/></svg></button><button title="Resection"><svg><use href="#tri"/></svg></button><button title="Triangle"><svg><use href="#tri"/></svg></button><button title="Disc"><svg><use href="#disc"/></svg></button><button title="Tracker"><svg><use href="#disc"/></svg></button>
        </div>
        <div class="toolbar w160">
          <button title="Target"><svg><use href="#target"/></svg></button><i></i><button title="Profile"><svg><use href="#steps"/></svg></button><i></i><button title="Profile view"><svg><use href="#steps2"/></svg></button><i></i><button title="Sections"><svg><use href="#steps"/></svg></button><button title="Add section"><svg><use href="#steps2"/></svg></button><i></i><button title="Quantity"><svg><use href="#steps"/></svg></button><i></i><button title="Bench"><svg><use href="#bench"/></svg></button><button title="Ramp"><svg><use href="#ramp"/></svg></button><button title="Slope"><svg><use href="#ramp"/></svg></button><i></i><button title="Stack"><svg><use href="#layers"/></svg></button><button title="Window"><svg><use href="#check"/></svg></button>
        </div>
      </div>

      <div class="workspace">
        <aside class="palette">
          <div class="palette-body">
            <h2>Toolspace</h2>
            <div class="palette-tools">
              <button class="on" title="Toggle"><svg><use href="#spark"/></svg></button>
              <button title="Panorama"><svg><use href="#sheet"/></svg></button>
              <button title="Preview"><svg><use href="#rect"/></svg></button>
              <button title="Help"><svg><use href="#help"/></svg></button>
            </div>
            <div class="view-box">
              <select aria-label="View"><option>Master View</option></select>
              <span class="sb"><svg><use href="#chev-d"/></svg></span>
            </div>
            <div class="tree-pane">
              <ul class="tree">
                <li class="l1 x"><svg><use href="#wave"/></svg>Mass Haul Line</li>
                <li class="l1 x"><svg><use href="#strip"/></svg>Mass Haul View</li>
                <li class="l1 x"><svg><use href="#pipes"/></svg>Pipe Network</li>
                <li class="l1 x"><svg><use href="#pipe"/></svg>Pipe</li>
                <li class="l1 x"><svg><use href="#struct"/></svg>Structure</li>
                <li class="l1 x"><svg><use href="#corr"/></svg>Corridor</li>
                <li class="l1 x"><svg><use href="#assy"/></svg>Assembly</li>
                <li class="l1 x"><svg><use href="#subassy"/></svg>Subassembly</li>
                <li class="l1 x"><svg><use href="#house"/></svg>Quantity Takeoff</li>
                <li class="l1 x"><svg><use href="#survey"/></svg>Survey</li>
                <li class="l1 x"><svg><use href="#frames"/></svg>View Frame Group</li>
                <li class="l1 x"><svg><use href="#frame"/></svg>View Frame</li>
                <li class="l1 x"><svg><use href="#matchline"/></svg>Match Line</li>
                <li class="l0 x open"><svg><use href="#dwg"/></svg>ODOT-Template-ver2A</li>
                <li class="l1 x"><svg><use href="#general"/></svg>General</li>
                <li class="l1 x open"><svg><use href="#ptnode"/></svg>Point</li>
                <li class="l2 x"><svg><use href="#folder"/></svg>User-Defined Property Classificatic</li>
                <li class="l2 x"><svg><use href="#folder"/></svg>Point Styles</li>
                <li class="l2 x open"><svg><use href="#folder"/></svg>Label Styles</li>
                <li class="l3"><svg><use href="#label"/></svg>ME Point#-Elevation-Descriptic</li>
                <li class="l3"><svg><use href="#label"/></svg><span class="flagged"></span>ODOT Point#-Elevation-Des</li>
                <li class="l3"><svg><use href="#label"/></svg>Point Number Only</li>
                <li class="l3"><svg><use href="#label"/></svg>Point# and Description</li>
                <li class="l3"><svg><use href="#label"/></svg>Standard</li>
                <li class="l3"><svg><use href="#expr"/></svg>Expressions</li>
                <li class="l2 x"><svg><use href="#folder"/></svg>Point File Formats</li>
                <li class="l2 x"><svg><use href="#folder"/></svg>Description Key Sets</li>
                <li class="l2"><svg><use href="#folder"/></svg>External Data References</li>
                <li class="l2 x"><svg><use href="#folder"/></svg>Table Styles</li>
                <li class="l2 x"><svg><use href="#folder"/></svg>Commands</li>
                <li class="l1 x open"><svg><use href="#surface"/></svg>Surface</li>
                <li class="l2 x"><svg><use href="#folder"/></svg>Surface Styles</li>
                <li class="l2 x"><svg><use href="#folder"/></svg>Label Styles</li>
                <li class="l2 x"><svg><use href="#folder"/></svg>Table Styles</li>
                <li class="l2 x"><svg><use href="#folder"/></svg>Commands</li>
                <li class="l1 x"><svg><use href="#parcel"/></svg>Parcel</li>
                <li class="l1 x"><svg><use href="#grading"/></svg>Grading</li>
                <li class="l1 x"><svg><use href="#parcel"/></svg>Alignment</li>
              </ul>
              <div class="scroll-v"><span class="sb"><svg><use href="#chev-u"/></svg></span><span class="thumb tree-thumb"></span><span class="sb"><svg><use href="#chev-d"/></svg></span></div>
            </div>
            <div class="scroll-h"><span class="sb"><svg><use href="#chev-l"/></svg></span><span class="thumb wide-thumb"></span><span class="sb"><svg><use href="#chev-r"/></svg></span></div>
            <div class="list-pane">
              <table>
                <thead><tr><th>Name</th><th>Description</th><th>Created</th></tr></thead>
                <tbody>
                  <tr><td><svg><use href="#style"/></svg>_No Display</td><td>Turns off all surfac</td><td class="y">Autodesk</td></tr>
                  <tr><td><svg><use href="#style"/></svg>Border Only</td><td></td><td class="y">Autodesk</td></tr>
                  <tr><td><svg><use href="#style"/></svg><span class="flagged"></span>Contours 1'</td><td>Surface contours a</td><td class="y">Autodesk</td></tr>
                  <tr><td><svg><use href="#style"/></svg>Contours 1' and</td><td>Surface contours a</td><td class="g">Autodesk</td></tr>
                  <tr><td><svg><use href="#style"/></svg>Contours 2' and</td><td>Surface contours a</td><td class="g">Autodesk</td></tr>
                  <tr><td><svg><use href="#style"/></svg>Contours 2' and</td><td>Surface contours a</td><td class="g">Autodesk</td></tr>
                  <tr><td><svg><use href="#style"/></svg>Contours 5' and</td><td>Surface contours a</td><td class="y">Autodesk</td></tr>
                  <tr><td><svg><use href="#style"/></svg>Contours 5' and</td><td>Surface contours a</td><td class="g">Autodesk</td></tr>
                  <tr><td><svg><use href="#style"/></svg>Contours and P</td><td></td><td class="y">James</td></tr>
                  <tr><td><svg><use href="#style"/></svg>Contours and T</td><td>Contours and trian</td><td class="g">Autodesk</td></tr>
                </tbody>
              </table>
              <div class="scroll-v"><span class="sb"><svg><use href="#chev-u"/></svg></span><span class="thumb list-thumb"></span><span class="sb"><svg><use href="#chev-d"/></svg></span></div>
            </div>
            <div class="scroll-h"><span class="sb"><svg><use href="#chev-l"/></svg></span><span class="thumb short-thumb"></span><span class="sb"><svg><use href="#chev-r"/></svg></span></div>
          </div>
          <div class="palette-tabs">
            <button>Prospector</button><button class="active">Settings</button><button>Survey</button><button>Toolbox</button>
          </div>
        </aside>

        <section class="drawing">
          <div class="views-row">
            <div class="views-wrap">
              <div class="views">
                <svg class="plan" viewBox="9 3 1275 1356" role="img" aria-label="Plan view">
                  <g class="contour">
                    <path d="M12 25H1284M50 8L32 30 28 60 35 78M120 8L95 30 92 75M178 8L150 35 155 78M270 10L230 40 227 76M355 28L335 50 323 76M905 28L870 77M1003 28L985 60 950 77M1100 28L1098 77M1190 28L1175 77M1284 45L1265 77"/>
                    <path d="M12 115L35 135 25 160 45 240 75 300 85 360 85 460 105 520 115 585 160 600 200 635 235 645 270 685 340 725"/>
                    <path d="M320 745L360 765 390 772 420 763 455 770 530 805 600 825 650 838 655 855 675 875 677 888 750 892 795 862 830 885 935 915 970 950 1025 998 1130 980 1150 948 1190 958 1250 880 1255 840 1284 805"/>
                    <path d="M128 85L130 155 165 210 180 320 205 420 255 470 325 550 370 570 400 615 440 620 475 650 570 675 650 690 770 708 850 745 910 718 945 672 980 658 1055 665 1075 650 1110 590 1165 558 1165 435 1110 320 1112 290 1140 265 1132 210 1138 120"/>
                    <path d="M150 80L180 130 255 235 272 300 280 385 350 450 410 510 435 498 500 550 590 570 640 590 735 603 800 642 820 635 850 590 875 583 930 595 985 580 1025 550 1095 465 1085 440 1040 355 1040 305 1058 285 1040 240 1038 180 1043 150 1035 105"/>
                    <path d="M290 90L305 125 325 240 345 290 355 350 450 395 480 430 505 445 525 470 600 480 700 500 730 518 860 508 910 500 940 460 955 410 940 380 945 310 970 240 970 140 930 112 960 95 1035 105 1070 85"/>
                    <path d="M480 85L440 105 435 155 412 178 515 275 575 357 610 352 650 385 700 405 775 460 825 457 880 380 875 350 895 245 887 210 897 165 860 160 838 148 855 100 845 82"/>
                    <path d="M180 130L280 95 285 105 180 132M240 85L318 97 300 120M355 85L393 155 388 85 485 85M400 97L415 97 405 108ZM515 275L535 265 535 275Z"/>
                    <path d="M535 150L600 100 635 88 660 90 655 108 630 110 580 140 560 158 538 160ZM772 113L782 109 782 118ZM870 95L885 92 917 110 890 112ZM962 105L995 88 1025 105 1000 114Z"/>
                    <path d="M373 375L450 410 450 440M385 380L440 440M12 290L35 370 38 440 65 560 90 655 125 645 160 690 215 710 270 715 320 745M12 520L30 605 60 660 110 700 150 752 180 773 240 765 270 785 298 830 295 850 390 880 480 888 515 883 635 915 640 932 700 938 795 940 815 930 870 955 920 990 1000 1090 1025 1170 1105 1187 1113 1230 1085 1228 1045 1270 1022 1356"/>
                    <path d="M12 590L30 690 60 730 85 750 150 790 M193 870L193 810 210 803 235 810 240 850 330 895 430 935 560 975 640 988 730 990 785 1047 895 1062 955 1155 960 1190 985 1228 965 1290 960 1356"/>
                    <path d="M12 690L50 760 90 790 150 815 180 885 205 870 193 865M215 870L280 905 370 950 480 975 600 1020 650 1090 700 1145 760 1175 862 1187 870 1290 878 1356"/>
                    <path d="M12 795L60 840 130 905 180 960 240 985 290 1010 365 1055 440 1070 480 1090 520 1150 590 1230 672 1253 645 1356M12 855L80 905 150 960 200 1000 280 1060 350 1115 410 1135 470 1185 545 1260 575 1300 582 1356"/>
                    <path d="M12 905L70 930 120 970 170 1010 240 1075 300 1130 385 1185 450 1250 540 1356M12 935L50 945 130 1000 180 1040 250 1110 330 1200 400 1260 480 1356M12 970L75 990 130 1030 190 1090 250 1160 330 1230 400 1310 440 1356"/>
                    <path d="M12 1085L60 1100 130 1145 150 1135 200 1190 280 1275 270 1290 310 1340 350 1345 375 1356M12 1140L90 1175 140 1190 190 1230 230 1270M12 1200L80 1240 130 1285 165 1282 220 1340 260 1356M12 1290L60 1330 100 1356M1085 1356L1100 1320 1150 1328 1195 1308 1195 1165 1220 1160 1284 1207"/>
                    <path d="M1284 262L1245 272 1168 428 1222 492 1284 498M1284 272L1248 282 1178 424 1226 482 1284 488M1284 282L1252 292 1188 420 1230 472 1284 478M1284 292L1255 302 1198 416 1234 462 1284 468M1284 302L1258 312 1208 412 1238 452 1284 458M1284 312L1262 322 1218 408 1242 442 1284 448M1284 322L1265 332 1228 404 1246 432 1284 438M1284 332L1268 342 1238 400 1250 422 1284 428M1284 342L1272 352 1248 396 1256 412 1284 418M1284 356L1262 390 1284 404"/>
                  </g>
                  <g class="contour index">
                    <path d="M12 77H1284M240 8L290 14 345 22 570 22M520 28L545 76 555 85M710 28L688 60 688 77M690 100V130M675 140L690 130 720 150 707 180 695 160 675 145Z"/>
                    <path d="M35 78L110 95 100 125 80 170 105 275 132 360 128 440 142 512 175 540 195 535 230 570 290 630 345 680 420 705 480 715 580 750 740 785 762 825 805 790 870 808 970 795 985 752 1010 755 1052 803 1068 750 1115 745 1128 750 1150 735 1148 690 1185 708 1240 655 1235 580 1240 503 1284 505"/>
                    <path d="M1125 95L1160 90 1190 97 1190 112 1150 115 1125 110ZM1190 103H1240M1120 90L1085 110 1105 155 1138 122M1245 85L1220 120 1208 230 1180 275 1195 350M1284 105L1275 120 1270 200 1284 240"/>
                    <path d="M12 740L70 800 130 860 165 905 215 905 265 940 340 970 375 995 450 1015 540 1055 605 1160 750 1217 765 1270 755 1356M12 1028L80 1040 125 1085 150 1080 200 1130 250 1180 310 1240 370 1310 385 1356"/>
                    <path d="M190 235L440 440M605 583L865 800M740 265L38 1110 12 1130"/>
                  </g>
                  <path class="edge" d="M12 28H268M470 28H625M240 9H262"/>
                  <path class="selected" d="M440 440L605 583"/>
                  <path class="sample" d="M583 277L718 395M512 361L650 482M372 531L508 652M300 614L436 735M230 700L365 820M157 784L295 905M88 870L224 990M18 955L152 1075M12 1095L84 1160"/>
                  <path class="station" d="M716 394L750 421M646 480L680 508M578 564L606 590M504 648L538 676M433 733L467 760M363 818L397 845M292 902L326 930M222 988L256 1015M150 1072L185 1100M80 1156L114 1185M12 1240L43 1268"/>
                  <path class="tag-big" d="M670 203L710 236"/>
                  <path class="tag-small" d="M706 230L780 300"/>
                  <path class="node" d="M595 431l14 10m-2-12l-8 14M454 600l14 10m-2-12l-8 14M312 770l14 10m-2-12l-8 14M172 938l14 10m-2-12l-8 14M30 1109l14 10m-2-12l-8 14"/>
                  <path class="ucs-lines" d="M38 1305h23v23H38zM49 1316V1193M37 1193l12-28 11 28zM49 1316H170M170 1306l27 10-27 10z"/>
                  <text x="224" y="1329" font-size="36" fill="#999">X</text>
                  <text x="46" y="1142" font-size="36" fill="#777">Y</text>
                </svg>
                <div class="views-right">
                  <svg viewBox="9 3 1281 681" role="img" aria-label="Section view">
                    <path d="M11 4H1287V682H11z" fill="none" stroke="#fff" stroke-width="3"/>
                    <path class="grid-line light" d="M352 373V565M424 370V565M496 370V565M568 370V565M637 370V565M709 370V565M781 370V565M853 370V565M925 370V565M997 364V565M273 422H1003M273 493H1003M280 373H403V370H947L998 364"/>
                    <path d="M280 373V565H1000M278 208H1002M280 208V240" fill="none" stroke="#00f" stroke-width="4"/>
                    <path d="M272 208h7M999 208h6M272 565h7M999 565h6M950 367h24" stroke="#fff" stroke-width="3"/>
                    <rect x="523" y="136" width="232" height="49" fill="none" stroke="#00a800" stroke-width="3"/>
                    <text class="cad-title" x="639" y="180">1+50.00</text>
                    <g class="cad-green" text-anchor="end">
                      <text x="268" y="216">710</text><text x="268" y="288">700</text><text x="268" y="360">690</text><text x="268" y="431">680</text><text x="268" y="502">670</text><text x="268" y="574">660</text>
                    </g>
                    <g class="cad-green">
                      <text x="1008" y="216">710</text><text x="1008" y="288">700</text><text x="1008" y="360">690</text><text x="1008" y="431">680</text><text x="1008" y="502">670</text><text x="1008" y="574">660</text>
                    </g>
                    <g class="cad-green side">
                      <text transform="translate(277 360) rotate(-90)">Off: −50.00</text><text transform="translate(300 366) rotate(-90)">Elev: 686.93</text>
                      <text transform="translate(456 363) rotate(-90)">Off: −25.00</text><text transform="translate(480 366) rotate(-90)">Elev: 687.19</text>
                      <text transform="translate(635 327) rotate(-90)">Off: 0.00</text><text transform="translate(659 364) rotate(-90)">Elev: 687.34</text>
                      <text transform="translate(812 340) rotate(-90)">Off: 25.00</text><text transform="translate(837 364) rotate(-90)">Elev: 687.50</text>
                      <text transform="translate(991 336) rotate(-90)">Off: 50.00</text><text transform="translate(1016 360) rotate(-90)">Elev: 688.00</text>
                    </g>
                    <g class="cad-axis">
                      <text x="281" y="624">−50</text><text x="353" y="624">−40</text><text x="425" y="624">−30</text><text x="496" y="624">−20</text><text x="568" y="624">−10</text><text x="639" y="624">0</text><text x="709" y="624">10</text><text x="781" y="624">20</text><text x="853" y="624">30</text><text x="925" y="624">40</text><text x="996" y="624">50</text>
                    </g>
                    <rect x="373" y="454" width="16" height="18" fill="none" stroke="#bbb" stroke-width="3"/>
                    <rect x="407" y="491" width="169" height="27" fill="#c8c8ea"/>
                    <text x="410" y="511" font-size="19" fill="#1c1c60">OZ=-35.97',674.34'</text>
                    <use href="#ucs" x="24" y="548" width="120" height="120"/>
                    <text class="cad-axis" x="134" y="666">X</text><text class="cad-axis" x="37" y="566">Y</text>
                  </svg>
                  <svg viewBox="9 9 1281 675" role="img" aria-label="Profile view">
                    <path class="grid-line" d="M19 195V512M65 195V512M110 195V512M155 195V512M200 195V512M292 195V512M335 195V512M380 195V512M427 195V512M472 195V512M517 195V512M607 195V512M652 195V512M697 195V512M743 195V512M788 195V512M833 195V512M877 195V512M922 195V512M970 195V512M1015 195V512M1060 195V512M1106 195V512M1150 195V512M1195 195V512M1240 195V512M19 238H1286M19 283H1286M19 331H1286M19 376H1286M19 421H1286M19 512H1286"/>
                    <path class="grid-line light" d="M245 195V512M562 195V512M19 466H1286"/>
                    <path d="M12 193H1286" stroke="#0000d0" stroke-width="3"/>
                    <path d="M127 240L155 241 200 250 245 258 292 270 335 280 380 292 405 302 427 315 472 330 517 363 545 376 580 385 652 421 695 455 735 465 757 482 812 482 822 473 877 460 955 436 1000 412 1068 388 1140 346 1190 325 1240 315 1286 307" fill="none" stroke="#00a000" stroke-width="3"/>
                    <path d="M106 521H1286" stroke="#fff" stroke-width="12" stroke-dasharray="8 82.5"/>
                    <path d="M104 532H1286" stroke="#fff" stroke-width="4" stroke-dasharray="13 77.5"/>
                    <path d="M11 9V682H1288V9" fill="none" stroke="#888" stroke-width="4"/>
                    <use href="#ucs" x="24" y="549" width="120" height="120"/>
                    <text class="cad-axis" x="130" y="667">X</text><text class="cad-axis" x="37" y="567">Y</text>
                  </svg>
                </div>
                <div class="scroll-v"><span class="sb"><svg><use href="#chev-u"/></svg></span><span class="thumb view-thumb"></span><span class="sb"><svg><use href="#chev-d"/></svg></span></div>
              </div>
              <div class="sheet-tabs">
                <span class="nav-btns"><button title="First">|◂</button><button title="Previous">◂</button><button title="Next">▸</button><button title="Last">▸|</button></span>
                <a href="#" class="active">Model</a><a href="#">Layout1</a><a href="#">Layout2</a><a href="#">Sheet - (1)</a><a href="#">Sheet - (2)</a><a href="#">Sheet - (3)</a><a href="#">Sheet - (4)</a><a href="#">Sheet - (5)</a>
                <div class="scroll-h"><span class="sb"><svg><use href="#chev-l"/></svg></span><span class="thumb mini-thumb"></span><span class="sb"><svg><use href="#chev-r"/></svg></span></div>
              </div>
            </div>
            <div class="side-tools">
              <button title="Extend"><svg><use href="#arrow"/></svg></button><button title="Curve"><svg><use href="#arrow-b"/></svg></button><button title="Delete"><svg><use href="#arrow-r"/></svg></button><i></i>
              <button title="Section editor"><svg><use href="#layer-b"/></svg></button><button title="Label"><svg><use href="#label"/></svg></button><button title="Contours"><svg><use href="#lines"/></svg></button><i></i>
              <button title="Window"><svg><use href="#preview"/></svg></button><button title="Grid"><svg><use href="#fork"/></svg></button><i></i>
              <button title="Edit"><svg><use href="#flag"/></svg></button><button title="Level"><svg><use href="#pt-g"/></svg></button><button title="Add point"><svg><use href="#pt-g"/></svg></button><button title="Delete point"><svg><use href="#pt-r"/></svg></button><button title="Move point"><svg><use href="#pt-g"/></svg></button><button title="Swap"><svg><use href="#arrow-b"/></svg></button><button title="Network"><svg><use href="#pt-g"/></svg></button><i></i>
              <button title="Surface"><svg><use href="#surface"/></svg></button><i></i>
              <button title="Raise"><svg><use href="#pt-y"/></svg></button><button title="Lower"><svg><use href="#pt-r"/></svg></button><button title="Join"><svg><use href="#pt-b"/></svg></button><button title="Break"><svg><use href="#cross"/></svg></button><button title="Insert"><svg><use href="#pt-b"/></svg></button><button title="Weed"><svg><use href="#pt-b"/></svg></button><button title="Trim"><svg><use href="#arrow"/></svg></button><button title="Offset"><svg><use href="#line"/></svg></button><button title="Smooth"><svg><use href="#hump"/></svg></button><button title="Spline"><svg><use href="#ess"/></svg></button><button title="Fit"><svg><use href="#pt-r"/></svg></button><button title="Reverse"><svg><use href="#arrow"/></svg></button>
            </div>
          </div>
          <div class="command">
            <div class="command-grip"></div>
            <div class="command-main">
<pre>Command: *Cancel*
Command: *Cancel*
Command: *Cancel*
Command: showdrawingtipsfull
Command: '_.zoom _e
Command: _u ZOOM INTELLIPAN INTELLIZOOM
Command:</pre>
              <div class="command-line">
                <label for="cmd">Command:</label><input id="cmd" type="text">
                <div class="scroll-h"><span class="sb"><svg><use href="#chev-l"/></svg></span><span class="thumb cmd-thumb"></span><span class="sb"><svg><use href="#chev-r"/></svg></span></div>
              </div>
            </div>
            <div class="scroll-v"><span class="sb"><svg><use href="#chev-u"/></svg></span><span class="thumb cmdv-thumb"></span><span class="sb"><svg><use href="#chev-d"/></svg></span></div>
          </div>
        </section>
      </div>

      <div class="status">
        <span class="coords">2451487.2835, 6935949.3438, 0.0000</span>
        <div class="modes"><button>SNAP</button><button>GRID</button><button>ORTHO</button><button>POLAR</button><button>OSNAP</button><button class="on">OTRACK</button><button>DUCS</button><button>DYN</button><button class="on">LWT</button><button>QP</button></div>
        <div class="status-right">
          <div><svg><use href="#model"/></svg><svg><use href="#layout"/></svg></div>
          <div><svg><use href="#pan"/></svg><svg><use href="#zoom"/></svg><svg><use href="#gear"/></svg><svg><use href="#blocks"/></svg></div>
          <div><svg><use href="#anno"/></svg><span>1" = 20'▾</span></div>
          <div><svg><use href="#anno-y"/></svg><svg><use href="#anno-y"/></svg></div>
          <div><svg><use href="#gear"/></svg><svg><use href="#insert"/></svg></div>
          <div><svg><use href="#check"/></svg><svg><use href="#bulb"/></svg><svg><use href="#layer-g"/></svg></div>
          <span>▾</span><svg><path d="M1 1h8v8H1z" fill="#ddd" stroke="#222"/><path d="M1 2h8" stroke="#222"/></svg>
        </div>
      </div>

      <div class="taskbar">
        <button class="start"><svg viewBox="0 0 10 10"><path d="M1 2l4-1v3.500H1z" fill="#e84c20"/><path d="M5.500 1L9 2v3H5.500z" fill="#78c038"/><path d="M1 5.500h4V9L1 8z" fill="#48a0f0"/><path d="M5.500 5.500H9V9H5.500z" fill="#f8c820"/></svg>start</button>
        <div class="quick-launch"><svg><use href="#ie"/></svg><svg><use href="#mail"/></svg><svg><use href="#desk"/></svg><span>»</span></div>
        <button class="task"><svg><use href="#mail"/></svg>Sent Items - Microsof ...</button>
        <button class="task active"><svg><use href="#civil"/></svg>AutoCAD Civil 3D 200...</button>
        <button class="task"><svg><use href="#vault"/></svg>Autodesk Vault 2009</button>
        <button class="task"><svg><use href="#ie"/></svg>Autodesk - AutoCAD ...</button>
        <button class="task"><svg><use href="#dir"/></svg>Downloads</button>
        <button class="task"><svg><use href="#word"/></svg>Controlling drawing ti...</button>
        <button class="task"><svg><use href="#pdf"/></svg>2007-10-19CADDMan...</button>
        <button class="task"><svg><use href="#paint"/></svg>untitled - Paint</button>
        <div class="tray"><svg><circle cx="5" cy="5" r="4.500" fill="#48a8f0" stroke="#cef" stroke-width=".6"/><path d="M6 3L4 5l2 2" fill="none" stroke="#fff"/></svg><svg><use href="#shield"/></svg><svg><use href="#mail"/></svg><svg><use href="#net"/></svg><svg><use href="#user"/></svg><svg><use href="#drive"/></svg><svg><use href="#tree"/></svg><time>11:36 AM</time></div>
      </div>
    </main>

    <footer></footer>
  </body>
</html>
```
FILE: styles.css
```css
*,
*::before,
*::after {
  box-sizing: border-box;
}

body {
  margin: 0;
  min-height: 100vh;
  display: flex;
  flex-direction: column;
  background: #fff;
  font-family: "Liberation Sans", Arial, sans-serif;
  overflow-x: hidden;
}

button,
input,
select {
  font: inherit;
  color: inherit;
  margin: 0;
  padding: 0;
  border: 0;
  background: none;
  border-radius: 0;
}

button {
  cursor: pointer;
}

a {
  color: inherit;
  text-decoration: none;
}

svg {
  display: block;
  flex: none;
}

.sprite {
  position: absolute;
  width: 0;
  height: 0;
}

/* letterhead */
.letterhead {
  height: 128px;
  display: flex;
  justify-content: space-between;
  padding-right: 48px;
}

.logo-asi {
  width: 410px;
  height: 118px;
}

.asi-name {
  font: bold 58px "DejaVu Serif Condensed", "DejaVu Serif", serif;
  fill: #231f20;
}

.asi-sub {
  font: 27px Lato, sans-serif;
  text-anchor: end;
  fill: #231f20;
}

.asi-tag {
  font: 15px Lato, sans-serif;
  fill: #231f20;
}

.logo-adsk {
  width: 231px;
  padding-top: 29px;
  white-space: nowrap;
}

.adsk-name {
  font: bold 36px/40px "DejaVu Serif Condensed", "DejaVu Serif", serif;
  color: #00a9e0;
}

.adsk-name span {
  font-size: 10px;
  vertical-align: top;
}

.adsk-sub {
  font: 20px/22px Lato, sans-serif;
  color: #58595b;
}

.title-band {
  height: 68px;
  margin: 0 20px 286px 19px;
  border-top: 6px solid #000;
  border-bottom: 6px solid #000;
}

footer {
  margin: auto 20px 0 19px;
  border-top: 3px solid #000;
}

/* application window */
.app {
  margin-left: 30px;
  background: #666;
  color: #111;
  font-size: 6px;
  line-height: 8px;
  white-space: nowrap;
  overflow: hidden;
}

.app svg {
  width: 10px;
  height: 10px;
}

.app-top {
  position: relative;
}

.app .app-button {
  position: absolute;
  left: 0;
  top: 0;
  width: 18px;
  height: 29px;
}

.titlebar {
  display: grid;
  grid-template-columns: 1fr auto 1fr;
  align-items: center;
  height: 14px;
  padding-left: 19px;
  background: linear-gradient(#777, #333 50%, #444);
}

.quick {
  display: flex;
  justify-content: space-around;
  width: 90px;
  height: 12px;
  align-items: center;
  background: linear-gradient(#999, #777);
  border-radius: 0 0 6px 0;
}

.doc-title {
  padding-right: 36px;
  font-size: 7px;
  color: #bbb;
}

.doc-title b {
  color: #fff;
}

.info {
  display: flex;
  align-items: center;
  justify-content: flex-end;
  gap: 1px;
}

.info-mark {
  color: #fff;
  margin-right: 2px;
}

.info input {
  width: 117px;
  height: 9px;
  padding-left: 2px;
  background: #fff;
}

.info input::placeholder {
  color: #999;
}

.info-btn {
  width: 12px;
  height: 9px;
  display: grid;
  place-items: center;
  background: #aaa;
}

.narrow {
  width: 4px;
}

.win-btns {
  display: flex;
  gap: 4px;
  padding: 0 2px 0 4px;
}

.menubar {
  display: flex;
  align-items: center;
  justify-content: space-between;
  height: 15px;
  padding-left: 26px;
  background: linear-gradient(#6a6a6a, #777);
  color: #eee;
}

.menus {
  display: flex;
  justify-content: space-between;
  width: 630px;
}

.ribbon-tabs {
  display: flex;
  align-items: stretch;
  gap: 5px;
  height: 11px;
  padding-left: 5px;
  line-height: 11px;
  color: #fff;
  background: linear-gradient(#999, #5c5f60 60%, #4a4d4e);
}

.ribbon-tabs a {
  padding: 0 5px;
}

.ribbon-tabs a.active {
  background: linear-gradient(#ccc, #999);
  color: #222;
  border-radius: 2px 2px 0 0;
}

.pill {
  align-self: center;
  margin-left: 11px;
  width: 7px;
  height: 4px;
  background: #eee;
  border-radius: 2px;
}

.help {
  margin: 2px 3px 2px auto;
  width: 7px;
  background: #eee;
  color: #111;
  line-height: 7px;
}

.panels {
  display: flex;
  gap: 1px;
  height: 11px;
  padding: 1px 2px;
  background: #555;
}

.panels button {
  background: linear-gradient(#fff, #ccc);
  color: #333;
  line-height: 8px;
}

.p114 { width: 114px; }
.p67 { width: 67px; }
.p82 { width: 82px; }
.p80 { width: 80px; }
.p60 { width: 60px; }
.p76 { width: 76px; }

/* toolbars */
.toolbar-row {
  display: flex;
  gap: 3px;
  padding: 2px 0 0 1px;
}

.toolbar {
  display: flex;
  align-items: center;
  height: 13px;
  background: #ebebe8;
  border-left: 4px solid #555;
  border-bottom: 1px solid #ccc;
}

.w361 { width: 361px; }
.w239 { width: 239px; }
.w130 { width: 130px; }
.w217 { width: 217px; }
.w273 { width: 273px; }
.w160 { width: 160px; }

.toolbar button {
  flex: 1;
  display: flex;
  justify-content: center;
}

.dim {
  color: #bbb;
}

.toolbar i {
  width: 1px;
  margin: 0 1px;
  height: 11px;
  background: #bbb;
}

.layer-box,
.view-box {
  display: flex;
  align-items: center;
  background: #fff;
  border: 1px solid #7f9db9;
}

.layer-box {
  width: 162px;
  height: 13px;
  padding-left: 2px;
}

.layer-box select,
.view-box select {
  flex: 1;
  min-width: 0;
  appearance: none;
}

.layer-box select {
  padding-left: 2px;
}

.swatch {
  width: 6px;
  height: 6px;
  border: 1px solid #222;
}

/* scroll bars */
.sb,
.thumb {
  display: grid;
  place-items: center;
  background: linear-gradient(90deg, #d4e2fc, #b4c8f4);
  border-radius: 1px;
}

.sb {
  flex: none;
  width: 9px;
  height: 9px;
}

.sb svg {
  width: 9px;
  height: 9px;
}

.scroll-v {
  flex: none;
  width: 10px;
  display: flex;
  flex-direction: column;
  justify-content: space-between;
  align-items: center;
  background: #f6f6f2;
}

.scroll-h {
  flex: none;
  height: 9px;
  display: flex;
  justify-content: space-between;
  align-items: center;
  background: #f6f6f2;
}

.scroll-v .thumb {
  width: 9px;
}

.scroll-h .thumb {
  height: 8px;
}

.tree-thumb {
  flex: 0 0 48%;
  margin-top: 79px;
  margin-bottom: auto;
}

.wide-thumb {
  width: 97px;
  margin-right: auto;
}

.short-thumb {
  width: 54px;
  margin-right: auto;
}

.list-thumb {
  height: 70px;
  margin-bottom: auto;
}

.view-thumb {
  height: 9px;
  margin-top: 56px;
  margin-bottom: auto;
}

.cmd-thumb {
  width: 7px;
}

.cmdv-thumb {
  height: 8px;
  margin-top: auto;
}

.mini-thumb {
  width: 9px;
  margin-left: auto;
  margin-right: 76px;
}

/* toolspace */
.workspace {
  display: flex;
  margin-top: 3px;
}

.palette {
  flex: none;
  width: 158px;
  display: flex;
}

.palette-body {
  width: 145px;
  display: flex;
  flex-direction: column;
  background: #ece9e0;
}

.palette h2 {
  margin: 0;
  padding-left: 7px;
  height: 13px;
  font-size: 7px;
  line-height: 14px;
  background: #a4a4a4;
}

.palette-tools {
  display: flex;
  align-items: center;
  gap: 3px;
  height: 14px;
  padding: 0 1px;
  background: #f2f1ec;
}

.palette-tools .on {
  margin-right: auto;
  border: 1px solid #316ac5;
  background: #e8e4d8;
}

.palette-tools button:last-child {
  margin-left: 4px;
}

.view-box {
  height: 12px;
  padding-left: 1px;
}

.tree-pane {
  flex: 1 1 0;
  display: flex;
  min-height: 0;
  background: #fff;
  border-left: 1px solid #7f9db9;
}

.tree {
  flex: 1;
  min-width: 0;
  margin: 0;
  padding: 1px 0 0;
  list-style: none;
  display: grid;
  grid-template-rows: repeat(37, minmax(0, 1fr)) 4px;
  overflow: hidden;
}

.tree li {
  display: flex;
  align-items: center;
  min-width: 0;
  min-height: 0;
}

.tree li:last-child {
  align-items: flex-start;
}

.tree li svg {
  width: 9px;
  height: 9px;
  margin-right: 2px;
}

.tree li::before {
  content: "";
  flex: none;
  width: 5px;
  height: 5px;
  margin-right: 3px;
}

.tree .x::before {
  content: "+";
  border: 1px solid #9ab;
  font: bold 5px/3px "Liberation Sans", sans-serif;
  text-align: center;
}

.tree .open::before {
  content: "-";
}

.l0 { padding-left: 5px; }
.l1 { padding-left: 15px; }
.l2 { padding-left: 25px; }
.l3 { padding-left: 36px; }

.flagged {
  flex: none;
  display: inline-block;
  width: 8px;
  height: 6px;
  background: linear-gradient(135deg, #f0a030 30%, transparent 30%);
}

.list-pane {
  display: flex;
  margin-top: 5px;
  background: #fff;
  border-top: 1px solid #999;
}

.list-pane table {
  flex: 1;
  width: 0;
  height: 104px;
  table-layout: fixed;
  border-collapse: collapse;
  line-height: 7px;
}

.list-pane th {
  height: 11px;
  padding: 0 0 0 6px;
  background: #ebeadb;
  font-weight: normal;
  text-align: left;
  overflow: hidden;
}

.list-pane th:first-child {
  width: 55px;
}

.list-pane th:last-child {
  width: 26px;
  padding-left: 4px;
}

.list-pane td {
  padding: 0 0 0 1px;
  border: 1px solid #eee;
  overflow: hidden;
}

.list-pane td svg {
  display: inline-block;
  width: 8px;
  height: 8px;
  vertical-align: middle;
  margin-right: 1px;
}

td.y { background: #ffffe4; }
td.g { background: #d8fcd8; }

.list-pane + .scroll-h {
  margin-bottom: 3px;
}

.palette-tabs {
  width: 9px;
  padding-top: 14px;
  display: flex;
  flex-direction: column;
}

.palette-tabs button {
  height: 75px;
  writing-mode: vertical-rl;
  transform: rotate(180deg);
  background: #bbb;
  border-top: 1px solid #444;
  line-height: 9px;
}

.palette-tabs .active {
  background: #eee;
}

/* drawing area */
.drawing {
  flex: 1;
  min-width: 0;
  display: flex;
  flex-direction: column;
}

.views-row {
  display: flex;
}

.views-wrap {
  flex: 1;
  min-width: 0;
}

.views {
  display: flex;
  align-items: stretch;
  background: #000;
}

.views .plan {
  flex: 425 1 0;
  min-width: 0;
  width: auto;
  height: auto;
}

.views-right {
  flex: 427 1 0;
  min-width: 0;
}

.views-right svg {
  width: 100%;
  height: auto;
}

.contour {
  fill: none;
  stroke: #505050;
  stroke-width: 3;
  shape-rendering: crispEdges;
}

.index {
  stroke: #858585;
}

.edge {
  stroke: #fff;
  stroke-width: 4;
}

.selected {
  stroke: #b01010;
  stroke-width: 3;
  stroke-dasharray: 14 5;
}

.sample {
  stroke: #2fa0a4;
  stroke-width: 3;
}

.station {
  stroke: #45c4c8;
  stroke-width: 9;
  stroke-dasharray: 4 2;
}

.tag-big {
  stroke: #e8e000;
  stroke-width: 16;
  stroke-dasharray: 5 2;
}

.tag-small {
  stroke: #e8e000;
  stroke-width: 8;
  stroke-dasharray: 8 2;
}

.node {
  stroke: #e8e000;
  stroke-width: 4;
}

.ucs-lines {
  fill: none;
  stroke: #aaa;
  stroke-width: 3;
}

.grid-line {
  fill: none;
  stroke: #606060;
  stroke-width: 3;
  shape-rendering: crispEdges;
}

.grid-line.light {
  stroke: #aaa;
}

.cad-title {
  font: 200 50px "DejaVu Sans Light", "DejaVu Sans", sans-serif;
  text-anchor: middle;
  fill: #00b400;
}

.cad-green {
  font-size: 24px;
  fill: #00b400;
}

.cad-green.side {
  font-size: 22px;
}

.cad-axis {
  font-size: 23px;
  text-anchor: middle;
  fill: #bbb;
}

.sheet-tabs {
  display: flex;
  align-items: center;
  height: 11px;
  background: #ece9d8;
  border-bottom: 1px solid #888;
}

.nav-btns {
  display: flex;
  width: 31px;
  justify-content: space-around;
  color: #888;
}

.sheet-tabs a {
  padding-left: 4px;
}

.sheet-tabs a::after {
  content: "/";
  margin-left: 2px;
}

.sheet-tabs a.active {
  align-self: stretch;
  padding: 0 6px;
  line-height: 10px;
  background: #000;
  color: #fff;
  font-weight: bold;
  clip-path: polygon(0 0, 100% 0, 90% 100%, 10% 100%);
}

.sheet-tabs a.active::after {
  content: none;
}

.sheet-tabs .scroll-h {
  width: 290px;
  margin-left: auto;
  margin-right: 10px;
}

.side-tools {
  flex: none;
  align-self: flex-start;
  width: 13px;
  margin: 0 1px 0 2px;
  padding-bottom: 1px;
  background: #ebebe8;
  border-top: 4px solid #444;
  display: flex;
  flex-direction: column;
  align-items: center;
}

.side-tools button {
  height: 12px;
  padding-top: 1px;
}

.side-tools i {
  width: 11px;
  height: 1px;
  margin: 1px 0;
  background: #aaa;
}

.command {
  display: flex;
  flex: 1;
  margin-top: 1px;
  background: #fff;
}

.command-grip {
  width: 6px;
  background: #ccc;
  border-top: 2px solid #666;
}

.command-main {
  flex: 1;
  display: flex;
  flex-direction: column;
  font-family: "Liberation Mono", "Courier New", monospace;
  font-size: 7px;
}

.command pre {
  margin: 0;
  padding-left: 2px;
  font: inherit;
  line-height: 9px;
  flex: 1;
}

.command-line {
  display: flex;
  align-items: center;
  height: 10px;
  padding-left: 2px;
  border-top: 1px solid #ccc;
}

.command-line input {
  flex: 1;
  height: 8px;
}

.command-line .scroll-h {
  width: 35px;
}

/* status bar */
.status {
  display: flex;
  align-items: center;
  height: 13px;
  background: linear-gradient(#777, #999);
}

.coords {
  width: 135px;
  padding-left: 7px;
}

.modes {
  display: flex;
  gap: 1px;
}

.modes button {
  height: 11px;
  background: #a8a8a8;
  border: 1px solid #c4c4c4;
  border-right-color: #555;
  border-width: 0 1px;
}

.modes .on {
  background: #a8e4f0;
}

.status-right {
  display: flex;
  align-items: center;
  gap: 3px;
  margin-left: auto;
  padding-right: 3px;
}

.status-right div {
  display: flex;
  align-items: center;
  gap: 1px;
  height: 11px;
  padding: 0 1px;
  background: #999;
  border: 1px solid #777;
}

/* task bar */
.taskbar {
  display: flex;
  align-items: stretch;
  height: 15px;
  color: #fff;
  background: linear-gradient(#4a8cf4, #245edb 20%, #245edb 80%, #1941a5);
}

.start {
  display: flex;
  align-items: center;
  gap: 2px;
  width: 52px;
  padding-left: 5px;
  background: linear-gradient(#5cb45c, #388e38 30%, #2e7d2e);
  border-radius: 0 6px 6px 0;
  font: italic bold 9px/15px "Noto Sans", sans-serif;
}

.start svg {
  width: 11px;
  height: 11px;
}

.quick-launch {
  display: flex;
  align-items: center;
  gap: 2px;
  width: 57px;
  padding-left: 6px;
}

.quick-launch span {
  margin-left: 6px;
  align-self: flex-start;
}

.task {
  display: flex;
  align-items: center;
  gap: 2px;
  width: 85px;
  margin: 1px 1px 1px 0;
  padding-left: 4px;
  background: linear-gradient(#5a9cff, #3c81f3 30%, #3a7cf0);
  border-radius: 1px;
}

.task.active {
  background: #1e52b7;
}

.tray {
  display: flex;
  align-items: center;
  width: 103px;
  margin-left: auto;
  background: linear-gradient(#3cb4f8, #1290e8 30%, #1290e8);
}

.tray time {
  margin-left: auto;
  padding-right: 7px;
}
```
